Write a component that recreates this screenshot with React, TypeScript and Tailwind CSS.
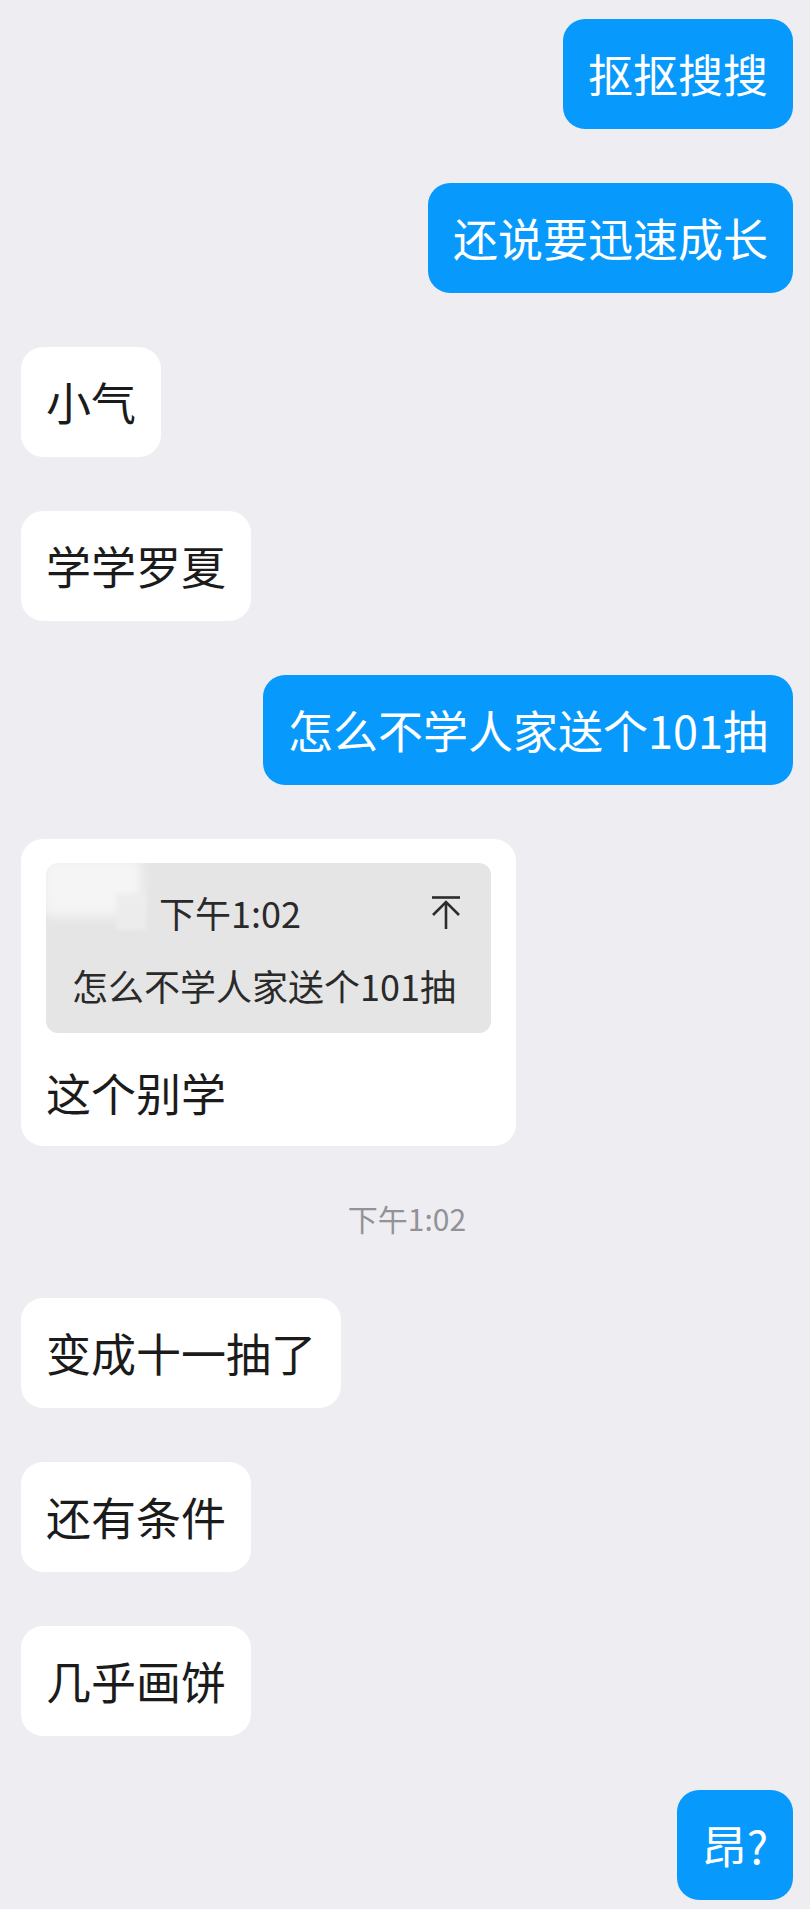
import React from "react";

const FONT = { fontFamily: '"Noto Sans CJK SC", "Noto Sans", sans-serif' };

function Mine({ text }: { text: string }) {
  return (
    <div className="flex justify-end">
      <div className="bg-[#0799fc] text-white text-[45px] leading-[52px] px-[25px] py-[29px] rounded-[22px] whitespace-nowrap">
        {text}
      </div>
    </div>
  );
}

function Theirs({ text }: { text: string }) {
  return (
    <div className="flex justify-start">
      <div className="bg-white text-[#1b1b1b] text-[45px] leading-[52px] px-[25px] py-[29px] rounded-[22px] whitespace-nowrap">
        {text}
      </div>
    </div>
  );
}

function PinIcon() {
  return (
    <svg width="30" height="34" viewBox="0 0 30 34" fill="none" stroke="#2c2c2c" strokeWidth="2.6" strokeLinecap="butt" strokeLinejoin="miter">
      <line x1="1" y1="2.5" x2="29" y2="2.5" />
      <polyline points="2,20 15,7 28,20" />
      <line x1="15" y1="7" x2="15" y2="34" />
    </svg>
  );
}

function QuoteBubble() {
  return (
    <div className="flex justify-start">
      <div className="bg-white rounded-[22px] pt-[24px] pb-[27px] px-[25px] flex flex-col">
        <div className="relative w-[445px] bg-[#e5e5e5] rounded-[12px] pt-[25px] pb-[24px] pl-[26px] pr-[30px] flex flex-col gap-[25px] overflow-visible">
          <div className="absolute -left-[4px] -top-[6px] w-[100px] h-[60px] bg-white/60 blur-[6px] rounded-[10px]" />
          <div className="relative flex items-center h-[48px]">
            <div className="w-[80px] h-[40px] flex items-center justify-end pr-[6px]">
              <div className="w-[30px] h-[36px] bg-[#ececec] blur-[2px]" />
            </div>
            <span className="ml-[7px] text-[36px] leading-[48px] text-[#2a2a2a]">下午1:02</span>
            <div className="ml-auto flex items-center">
              <PinIcon />
            </div>
          </div>
          <div className="relative text-[36px] leading-[48px] text-[#2a2a2a] whitespace-nowrap">
            怎么不学人家送个101抽
          </div>
        </div>
        <div className="mt-[34px] text-[45px] leading-[52px] text-[#1b1b1b]">这个别学</div>
      </div>
    </div>
  );
}

export default function App() {
  return (
    <div style={FONT} className="w-[810px] min-h-[1909px] bg-[#eeeef2] pl-[21px] pr-[17px] pt-[19px] pb-[10px] flex flex-col">
      <div className="flex flex-col gap-[54px]">
        <Mine text="抠抠搜搜" />
        <Mine text="还说要迅速成长" />
        <Theirs text="小气" />
        <Theirs text="学学罗夏" />
        <Mine text="怎么不学人家送个101抽" />
        <QuoteBubble />
      </div>
      <div className="mt-[52px] mb-[60px] flex justify-center h-[40px] items-center">
        <span className="text-[30px] leading-[40px] text-[#929297]">下午1:02</span>
      </div>
      <div className="flex flex-col gap-[54px]">
        <Theirs text="变成十一抽了" />
        <Theirs text="还有条件" />
        <Theirs text="几乎画饼" />
        <Mine text="昂?" />
      </div>
    </div>
  );
}
